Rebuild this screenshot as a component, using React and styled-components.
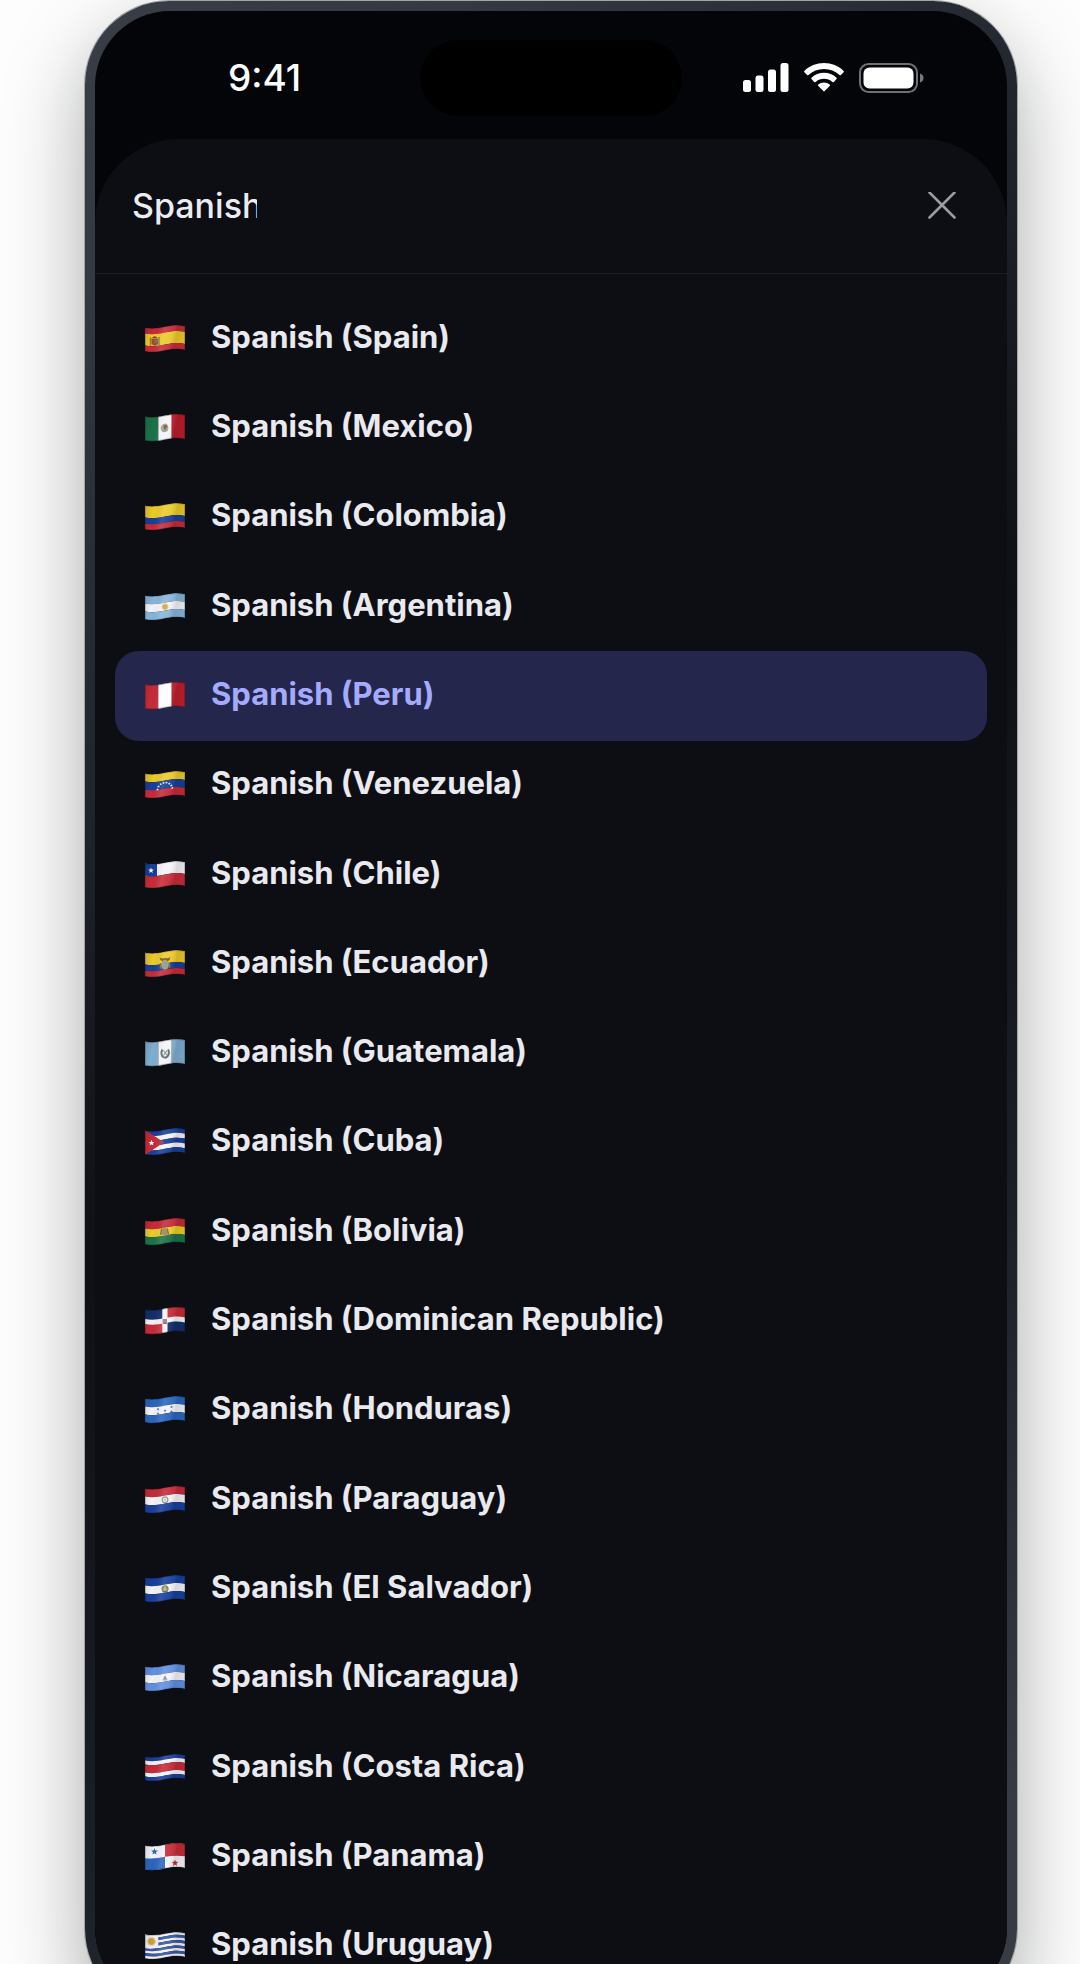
import React, { useId, useState } from 'react';
import styled, { createGlobalStyle } from 'styled-components';

const GlobalStyle = createGlobalStyle`
  * {
    box-sizing: border-box;
  }

  body {
    margin: 0;
    background: #fdfdfd;
    font-family: Inter, 'Liberation Sans', sans-serif;
  }
`;

const Page = styled.div`
  height: 100vh;
  padding: 1px 63px 0 85px;
  overflow: hidden;
`;

const Phone = styled.main`
  display: flex;
  min-height: calc(100vh + 48px);
  padding: 10px;
  border-radius: 84px;
  background: linear-gradient(144deg, #383d46 0%, #343942 10%, #252a32 25%, #0d1014 47%, #1b2027 70%, #2a2e36 81%, #363b44 92%);
  box-shadow:
    0 0 0 1px #a2a4a8,
    0 32px 80px rgba(10, 11, 16, 0.34);
`;

const Screen = styled.div`
  position: relative;
  display: flex;
  flex: 1;
  flex-direction: column;
  overflow: hidden;
  border-radius: 75px;
  background: #030508;
`;

const StatusBar = styled.header`
  display: flex;
  align-items: center;
  justify-content: space-between;
  height: 128px;
  padding: 6px 83px 0 133px;
`;

const Time = styled.time`
  color: #fff;
  font-size: 37px;
  font-weight: 500;
  line-height: 44px;
`;

const StatusIcons = styled.div`
  display: flex;
  align-items: center;
  gap: 15px;
`;

const Island = styled.div`
  position: absolute;
  top: 29px;
  left: 50%;
  width: 262px;
  height: 76px;
  margin-left: -131px;
  border-radius: 38px;
  background: #000;
`;

const Sheet = styled.section`
  display: flex;
  flex: 1;
  flex-direction: column;
  border-radius: 84px 84px 0 0;
  background: #0c0e13;
`;

const SearchBar = styled.form`
  display: flex;
  align-items: center;
  justify-content: space-between;
  height: 135px;
  padding: 0 45px 0 37px;
  border-bottom: 1px solid #1a1c21;
`;

const SearchInput = styled.input`
  width: 125px;
  padding: 0;
  border: 0;
  outline: 0;
  background: transparent;
  color: #ebecf1;
  font-family: inherit;
  font-size: 34px;
  font-weight: 500;
  line-height: 44px;
`;

const CloseButton = styled.button`
  display: flex;
  padding: 6px;
  border: 0;
  background: transparent;
  color: #9b9ca1;
  cursor: pointer;
`;

const List = styled.ul`
  display: grid;
  flex: 1;
  grid-auto-rows: minmax(80px, 1fr);
  margin: 0;
  padding: 20px 20px 12px;
  list-style: none;
`;

const Item = styled.li`
  display: grid;
`;

const Option = styled.button`
  display: flex;
  align-items: center;
  gap: 26px;
  padding: 0 30px;
  border: 0;
  border-radius: 24px;
  background: ${(props) => (props.$selected ? '#25264b' : 'transparent')};
  color: ${(props) => (props.$selected ? '#a4abff' : '#e9eaef')};
  font-family: inherit;
  font-size: 31px;
  font-weight: 700;
  line-height: 40px;
  text-align: left;
  cursor: pointer;
`;

const OptionLabel = styled.span`
  padding-bottom: 4px;
`;

const RED = '#c62b38';
const YELLOW = '#ecca2a';
const BLUE = '#173f9c';
const NAVY = '#132f6b';
const GREEN = '#1b7348';
const WHITE = '#f4f4f8';

// stripe that follows the wave of the cloth, from y0 to y1
const band = (y0, y1) =>
    `M0 ${y0 + 2.4} C6 ${y0 + 3.8} 12 ${y0 + 3.2} 20 ${y0 + 1.6} S33 ${y0 - 0.6} 40 ${y0 + 1}` +
    ` V${y1 + 1} C33 ${y1 - 0.6} 27 ${y1} 20 ${y1 + 1.6} S6 ${y1 + 3.8} 0 ${y1 + 2.4} Z`;

const stripes = (colors, edges) => {
    const stops = edges || colors.map((c, i) => ((i + 1) * 24) / colors.length);
    return colors.map((color, i) => (
        <path key={i} d={band(i === 0 ? 0 : stops[i - 1], stops[i])} fill={color} />
    ));
};

const bars = (colors) =>
    colors.map((color, i) => <rect key={i} x={(i * 40) / 3} width="13.4" height="28" fill={color} />);

const Star = ({ x, y, r, fill }) => {
    const points = [];
    for (let i = 0; i < 10; i++) {
        const radius = i % 2 ? r * 0.42 : r;
        const angle = (Math.PI * i) / 5;
        points.push(`${x + radius * Math.sin(angle)},${y - radius * Math.cos(angle)}`);
    }
    return <polygon points={points.join(' ')} fill={fill} />;
};

const flags = {
    spain: (
        <>
            {stripes([RED, YELLOW, RED], [6, 18, 24])}
            <path d="M5.500 12.500v8.500M14 12v8.500" stroke="#8f7a3a" strokeWidth="1.400" />
            <path d="M6.500 13.500h6.500v5.500q-3.200 3.500-6.500 0z" fill="#a8482e" />
            <path d="M9.500 14.500h3v3.500h-3z" fill="#6f7187" />
            <path d="M7 13q2.700-3.400 5.400 0z" fill="#8d3b24" />
        </>
    ),
    mexico: (
        <>
            {bars([GREEN, WHITE, '#b91d2b'])}
            <path d="M15.500 14q1-4.500 5.500-4.500q3 2 2.300 5.500q-2.300 4-5.500 3q-1.800-1-2.300-4z" fill="#a9a28f" />
            <path d="M18.500 11q3.300-1 4 1.800l-2.800 3.400q-1.700-2.400-1.200-5.200z" fill="#7c5a3c" />
            <path d="M16.500 15.500q2.500 3.500 6.500.500" fill="none" stroke="#6f9c8c" />
        </>
    ),
    colombia: stripes([YELLOW, BLUE, RED], [12, 18, 24]),
    argentina: (
        <>
            {stripes(['#86b5dc', WHITE, '#86b5dc'])}
            <circle cx="20" cy="13.800" r="3.500" fill="#e3c98c" />
            <circle cx="20" cy="13.800" r="2.400" fill="#d9a23c" />
        </>
    ),
    peru: bars([RED, '#fff', '#c01f2d']),
    venezuela: (
        <>
            {stripes([YELLOW, BLUE, RED])}
            {[[12.5, 18.5], [13.5, 15.5], [15.7, 13.2], [18.5, 12], [21.500, 11.700], [24.300, 12.600], [26.300, 14.500], [27.300, 17]].map(([x, y]) => (
                <Star key={x} x={x} y={y} r={1.4} fill="#fff" />
            ))}
        </>
    ),
    chile: (
        <>
            {stripes([WHITE, RED], [12, 24])}
            <path d="M0 0H12V15.200Q5 16 0 14.600Z" fill={BLUE} />
            <Star x={6} y={9.5} r={3} fill="#fff" />
        </>
    ),
    ecuador: (
        <>
            {stripes([YELLOW, BLUE, RED], [12, 18, 24])}
            <path d="M14.500 7.500q2.500 1.500 5.500.500q3 1 5.500-.900q-.500 3.500-3 4.500h-5q-2.500-1-3-4.100z" fill="#6b5a34" />
            <path d="M15.500 13v5.500M24.500 12.500v5.500" stroke="#8a6a3e" strokeWidth="1.500" />
            <ellipse cx="20" cy="14.800" rx="3.800" ry="5" fill="#b9964c" />
            <ellipse cx="20" cy="14.800" rx="2.200" ry="3.200" fill="#6fa0b8" />
        </>
    ),
    guatemala: (
        <>
            {bars(['#7faed0', WHITE, '#7faed0'])}
            <path d="M17.500 10.500q-2.500 4 .500 7.500q2.500 1.500 4.500-.500q2.500-4 .500-7" fill="none" stroke="#5a6e6c" strokeWidth="2" />
            <path d="M18.500 11.500l3.500 5M22 11.500l-3.500 5" stroke="#8b8f88" strokeWidth="1.200" />
        </>
    ),
    cuba: (
        <>
            {stripes([BLUE, WHITE, BLUE, WHITE, BLUE])}
            <path d="M0 2L19 14.300L0 27Z" fill={RED} />
            <Star x={6.5} y={15} r={3.2} fill="#fff" />
        </>
    ),
    bolivia: (
        <>
            {stripes([RED, YELLOW, GREEN])}
            <ellipse cx="19.500" cy="14" rx="3.700" ry="4" fill="#a98a3f" />
            <ellipse cx="19.500" cy="14" rx="2" ry="2.500" fill="#7d8f7e" />
            <path d="M16.500 11l-1 6M22.500 10.500l1 6" stroke="#8a4b2c" />
        </>
    ),
    dominicanRepublic: (
        <>
            <rect width="20" height="15" fill={NAVY} />
            <rect x="20" width="20" height="15" fill={RED} />
            <path d="M0 15h20v13H0z" fill={RED} />
            <path d="M20 14h20v14H20z" fill={NAVY} />
            <path d={band(9.5, 14.5)} fill={WHITE} />
            <rect x="17.300" width="5.200" height="28" fill={WHITE} />
            <path d="M17.500 12h4.500v4q-2.200 1.800-4.500 0z" fill="#8d8390" />
            <path d="M18.500 16.500h3" stroke={RED} />
        </>
    ),
    honduras: (
        <>
            {stripes(['#2a66bd', WHITE, '#2a66bd'])}
            {[[13, 13.2], [13, 17.7], [20, 14.5], [26.5, 11], [26.5, 15.5]].map(([x, y], i) => (
                <Star key={i} x={x} y={y} r={1.6} fill="#2a66bd" />
            ))}
        </>
    ),
    paraguay: (
        <>
            {stripes([RED, WHITE, BLUE])}
            <circle cx="20" cy="13.800" r="2.800" fill="none" stroke="#8f9a94" strokeWidth="1.400" />
            <circle cx="20" cy="13.800" r="1" fill="#c3b06b" />
        </>
    ),
    elSalvador: (
        <>
            {stripes([BLUE, WHITE, BLUE])}
            <circle cx="20" cy="13.800" r="3.600" fill="#74806a" />
            <path d="M20 10.800l2.400 4.600h-4.800z" fill="#d9b35a" />
            <path d="M17.500 16.800h5" stroke="#3e5aa3" />
        </>
    ),
    nicaragua: (
        <>
            {stripes(['#5f90e2', WHITE, '#5f90e2'])}
            <path d="M20 11.300l2.500 4.500h-5z" fill="#7d97a0" />
            <path d="M17.500 16.800h5" stroke="#b9bfa8" />
        </>
    ),
    costaRica: stripes([BLUE, WHITE, RED, WHITE, BLUE], [4, 8, 16, 20, 24]),
    panama: (
        <>
            <path d={band(0, 24)} fill={WHITE} />
            <path d="M20 0H40V13.200Q30 12 20 13.800Z" fill={RED} />
            <path d="M0 15.200Q9 16.500 20 13.800V28H0Z" fill="#2a66bd" />
            <Star x={9.500} y={8.7} r={3.6} fill="#2a66bd" />
            <Star x={30} y={20} r={3.6} fill={RED} />
        </>
    ),
    uruguay: (
        <>
            {stripes([WHITE, '#3459a8', WHITE, '#3459a8', WHITE, '#3459a8', WHITE, '#3459a8', WHITE])}
            <path d="M0 0H13.300V15.500Q6 17.500 0 16Z" fill={WHITE} />
            <circle cx="6.500" cy="9.500" r="4.200" fill="none" stroke="#dfb27d" strokeDasharray="1.200 1" />
            <circle cx="6.500" cy="9.500" r="3.400" fill="#cf9f38" />
        </>
    ),
};

const languages = [
    { country: 'Spain', flag: 'spain' },
    { country: 'Mexico', flag: 'mexico' },
    { country: 'Colombia', flag: 'colombia' },
    { country: 'Argentina', flag: 'argentina' },
    { country: 'Peru', flag: 'peru' },
    { country: 'Venezuela', flag: 'venezuela' },
    { country: 'Chile', flag: 'chile' },
    { country: 'Ecuador', flag: 'ecuador' },
    { country: 'Guatemala', flag: 'guatemala' },
    { country: 'Cuba', flag: 'cuba' },
    { country: 'Bolivia', flag: 'bolivia' },
    { country: 'Dominican Republic', flag: 'dominicanRepublic' },
    { country: 'Honduras', flag: 'honduras' },
    { country: 'Paraguay', flag: 'paraguay' },
    { country: 'El Salvador', flag: 'elSalvador' },
    { country: 'Nicaragua', flag: 'nicaragua' },
    { country: 'Costa Rica', flag: 'costaRica' },
    { country: 'Panama', flag: 'panama' },
    { country: 'Uruguay', flag: 'uruguay' },
];

function Flag({ name }) {
    const id = useId();
    return (
        <svg width="40" height="28" viewBox="0 0 40 28" aria-hidden="true">
            <defs>
                <clipPath id={`${id}cloth`}>
                    <path d={band(0, 24)} />
                </clipPath>
                <linearGradient id={`${id}shade`} x1="0" x2="1" y1="0" y2="0.15">
                    <stop offset="0" stopColor="#000" stopOpacity="0.14" />
                    <stop offset="0.25" stopColor="#000" stopOpacity="0" />
                    <stop offset="0.5" stopColor="#fff" stopOpacity="0.12" />
                    <stop offset="0.66" stopColor="#fff" stopOpacity="0.06" />
                    <stop offset="0.82" stopColor="#000" stopOpacity="0.12" />
                    <stop offset="1" stopColor="#000" stopOpacity="0.08" />
                </linearGradient>
            </defs>
            <g clipPath={`url(#${id}cloth)`}>
                {flags[name]}
                <rect width="40" height="28" fill={`url(#${id}shade)`} />
                <path d={band(0, 24)} fill="none" stroke="#000" strokeOpacity="0.25" strokeWidth="1.5" />
            </g>
        </svg>
    );
}

function SignalIcon() {
    return (
        <svg width="46" height="30" viewBox="0 0 46 30" fill="#fff" aria-hidden="true">
            <rect x="0" y="17" width="8" height="12" rx="2.500" />
            <rect x="12.500" y="12.500" width="8" height="16.500" rx="2.500" />
            <rect x="25" y="6.500" width="8" height="22.500" rx="2.500" />
            <rect x="37.500" y="0" width="8" height="29" rx="2.500" />
        </svg>
    );
}

function WifiIcon() {
    return (
        <svg width="40" height="30" viewBox="0 0 40 30" fill="#fff" aria-hidden="true">
            <path d="M20 0C12.500 0 5.500 2.900 .400 7.900Q-.200 8.600 .400 9.300L3.100 12Q3.800 12.600 4.500 12C8.600 8.100 14 6 20 6s11.400 2.100 15.500 6q.700.600 1.400 0L39.600 9.300q.600-.700 0-1.400C34.500 2.900 27.500 0 20 0z" />
            <path d="M20 9.800c-4.800 0-9.200 1.800-12.500 4.900q-.700.700 0 1.400L10.200 18.900q.700.600 1.400 0C13.900 16.900 16.800 15.700 20 15.700s6.100 1.200 8.400 3.200q.700.600 1.400 0l2.700-2.800q.700-.700 0-1.400C29.200 11.600 24.800 9.800 20 9.800z" />
            <path d="M20 19.500c-2.200 0-4.200.700-5.700 2q-.700.700 0 1.400L19.300 28q.700.600 1.400 0l5-5.100q.700-.700 0-1.400c-1.500-1.300-3.500-2-5.700-2z" />
        </svg>
    );
}

function BatteryIcon() {
    return (
        <svg width="65" height="30" viewBox="0 0 65 30" aria-hidden="true">
            <rect x="1" y="1" width="57" height="28" rx="8.500" fill="none" stroke="#6f7073" strokeWidth="2" />
            <rect x="4.500" y="4.500" width="50" height="21" rx="6" fill="#fff" />
            <path d="M61 10.500q3.500 1.200 3.500 4.500t-3.500 4.500z" fill="#77787b" />
        </svg>
    );
}

function CloseIcon() {
    return (
        <svg width="28" height="28" viewBox="0 0 28 28" fill="none" stroke="currentColor" strokeWidth="2.600" strokeLinecap="round" aria-hidden="true">
            <path d="M1.500 .500L26.500 25.500M26.500 .500L1.500 25.500" />
        </svg>
    );
}

function App() {
    const [query, setQuery] = useState('Spanish');
    const [selected, setSelected] = useState('Peru');

    return (
        <Page>
            <GlobalStyle />
            <Phone>
                <Screen>
                    <Island />
                    <StatusBar>
                        <Time>9:41</Time>
                        <StatusIcons>
                            <SignalIcon />
                            <WifiIcon />
                            <BatteryIcon />
                        </StatusIcons>
                    </StatusBar>
                    <Sheet>
                        <SearchBar onSubmit={(e) => e.preventDefault()}>
                            <SearchInput
                                type="text"
                                aria-label="Search language"
                                value={query}
                                onChange={(e) => setQuery(e.target.value)}
                            />
                            <CloseButton type="button" aria-label="Close" onClick={() => setQuery('')}>
                                <CloseIcon />
                            </CloseButton>
                        </SearchBar>
                        <List>
                            {languages.map(({ country, flag }) => (
                                <Item key={country}>
                                    <Option
                                        type="button"
                                        $selected={country === selected}
                                        aria-pressed={country === selected}
                                        onClick={() => setSelected(country)}
                                    >
                                        <Flag name={flag} />
                                        <OptionLabel>{`Spanish (${country})`}</OptionLabel>
                                    </Option>
                                </Item>
                            ))}
                        </List>
                    </Sheet>
                </Screen>
            </Phone>
        </Page>
    );
}

export default App;
